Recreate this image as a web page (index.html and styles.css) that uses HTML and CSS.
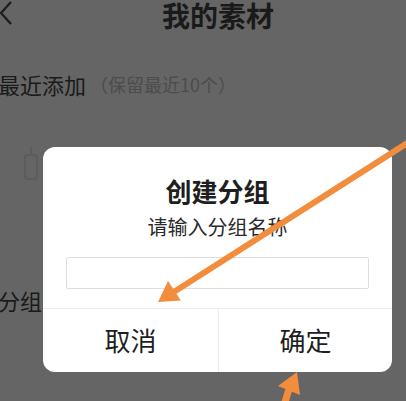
FILE: index.html
```html
<!DOCTYPE html>
<html lang="zh">
<head>
<meta charset="utf-8">
<link rel="stylesheet" href="styles.css">
</head>
<body>
<div class="page">
  <header class="topbar">
    <svg class="back" width="14" height="26" viewBox="0 0 14 26"><polyline points="11,2 1,13 11,24" fill="none" stroke="#1c1c1c" stroke-width="2.2"/></svg>
    <h1 class="title">我的素材</h1>
  </header>
  <section class="recent">
    <div class="recent-head"><span class="recent-label">最近添加</span><span class="recent-note">（保留最近10个）</span></div>
    <div class="recent-list">
      <svg class="ghost" width="20" height="36" viewBox="0 0 20 36"><rect x="3" y="10" width="12" height="24" rx="3" fill="none" stroke="#5c5c5c" stroke-width="2"/><line x1="9" y1="2" x2="9" y2="10" stroke="#5c5c5c" stroke-width="2"/></svg>
    </div>
  </section>
  <section class="groups">
    <span class="groups-label">分组</span>
  </section>

  <div class="dialog">
    <div class="dialog-title">创建分组</div>
    <div class="dialog-sub">请输入分组名称</div>
    <div class="dialog-input"></div>
    <div class="dialog-actions">
      <div class="btn">取消</div>
      <div class="btn btn-ok">确定</div>
    </div>
  </div>

  <svg class="arrows" width="406" height="401" viewBox="0 0 406 401">
    <line x1="420" y1="135" x2="173" y2="292.5" stroke="#f28d3d" stroke-width="6"/>
    <polygon points="158,302 180.8,300.6 168,281" fill="#f28d3d"/>
    <line x1="282" y1="412" x2="289" y2="389" stroke="#f28d3d" stroke-width="7"/>
    <polygon points="297,372 300,395 278,386" fill="#f28d3d"/>
  </svg>
</div>
</body>
</html>
```
FILE: styles.css
```css
html, body {
  margin: 0;
  padding: 0;
}
body {
  width: 406px;
  height: 401px;
  overflow: hidden;
  background: #656565;
  font-family: "Noto Sans CJK SC", "Noto Sans", sans-serif;
}
.page {
  position: relative;
  width: 406px;
  height: 401px;
  overflow: hidden;
  background: #656565;
}
.topbar {
  position: relative;
  height: 32px;
  display: flex;
  align-items: center;
  justify-content: center;
}
.back {
  position: absolute;
  left: 0;
  top: 0;
}
.title {
  margin: 0;
  font-size: 28px;
  line-height: 32px;
  font-weight: 700;
  color: #1a1a1a;
  margin-left: 30px;
  margin-top: -2px;
}
.recent {
  padding-top: 37px;
}
.recent-head {
  display: flex;
  align-items: center;
  height: 30px;
}
.recent-label {
  font-size: 22px;
  color: #1a1a1a;
  margin-left: -2px;
}
.recent-note {
  font-size: 18px;
  color: #4c4c4c;
  margin-left: 4px;
}
.recent-list {
  padding: 46px 0 0 22px;
  height: 140px;
}
.ghost {
  display: block;
}
.groups {
  height: 30px;
  display: flex;
  align-items: center;
}
.groups-label {
  font-size: 22px;
  color: #1a1a1a;
  margin-left: -2px;
}
.dialog {
  position: absolute;
  left: 43px;
  top: 147px;
  width: 349px;
  height: 225px;
  background: #fff;
  border-radius: 12px;
  display: flex;
  flex-direction: column;
  align-items: center;
  overflow: hidden;
}
.dialog-title {
  margin-top: 29px;
  font-size: 26px;
  line-height: 30px;
  font-weight: 700;
  color: #1e1e1e;
}
.dialog-sub {
  margin-top: 8px;
  font-size: 20px;
  line-height: 26px;
  color: #2a2a2a;
}
.dialog-input {
  margin-top: 17px;
  width: 301px;
  height: 30px;
  border: 1px solid #dedede;
  border-radius: 2px;
  box-sizing: content-box;
}
.dialog-actions {
  margin-top: 19px;
  width: 100%;
  flex: 1;
  display: grid;
  grid-template-columns: 175px 1fr;
  border-top: 1px solid #ececec;
}
.btn {
  display: flex;
  align-items: center;
  justify-content: center;
  font-size: 26px;
  color: #1e1e1e;
  padding-bottom: 2px;
}
.btn-ok {
  border-left: 1px solid #ececec;
}
.arrows {
  position: absolute;
  left: 0;
  top: 0;
}
```
